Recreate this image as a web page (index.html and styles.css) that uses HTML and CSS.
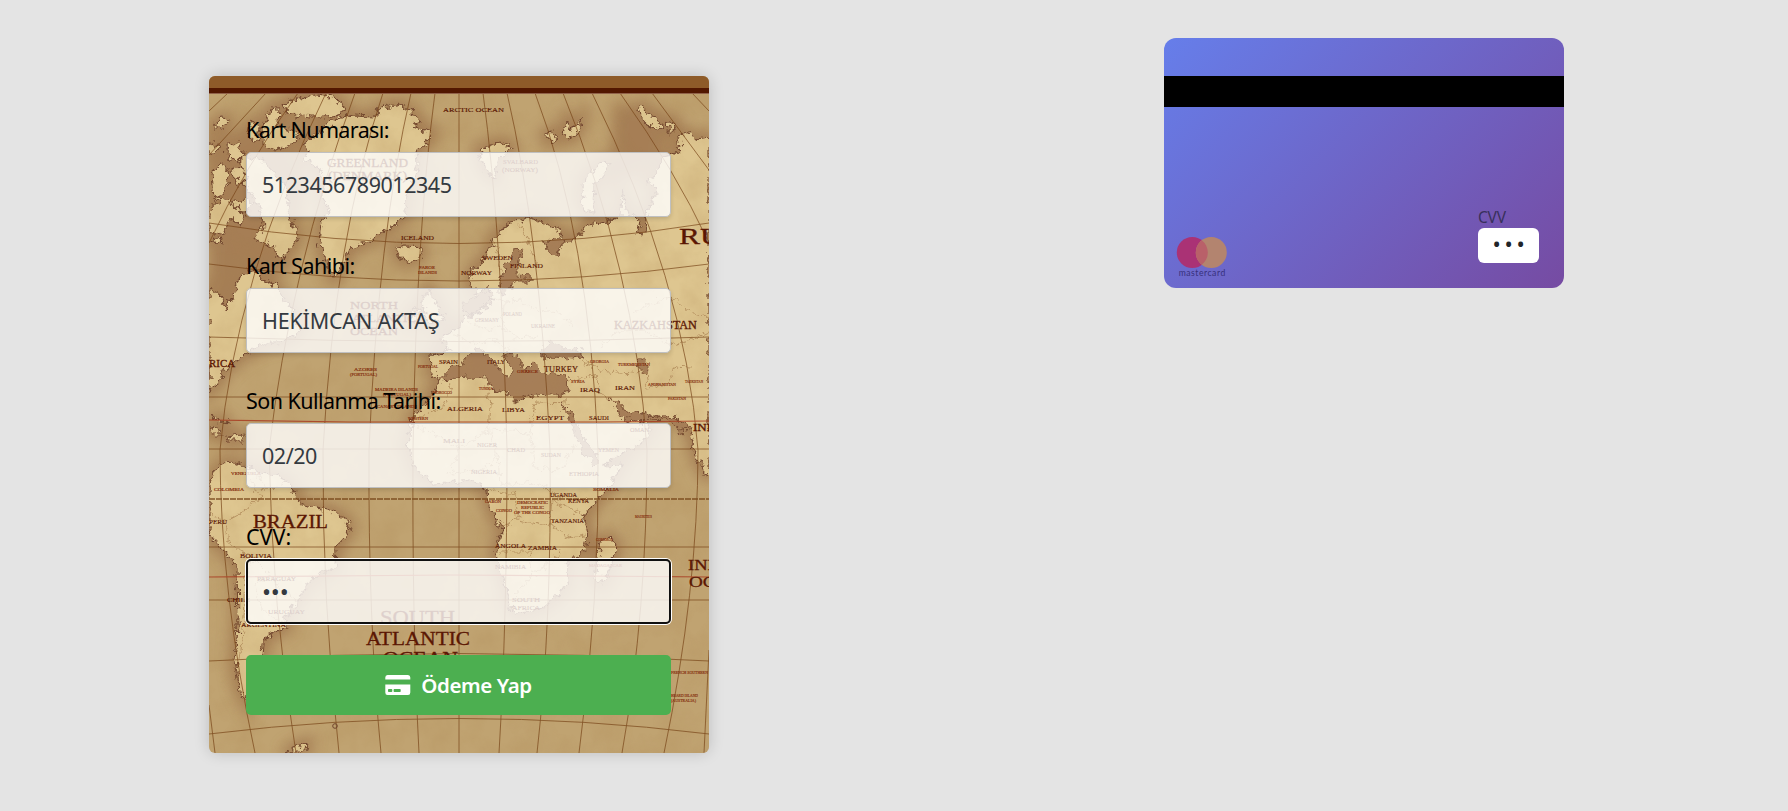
FILE: index.html
```html
<!DOCTYPE html>
<html lang="tr">
<head>
<meta charset="utf-8">
<title>Ödeme</title>
<link rel="stylesheet" href="styles.css">
</head>
<body>
<main class="page">
<section class="column">
<form class="payment">
<svg class="map" viewBox="209 76 500 677" width="500" height="677" aria-hidden="true">
<defs>
<filter id="coast" x="-5%" y="-5%" width="110%" height="110%"><feTurbulence type="fractalNoise" baseFrequency=".16" numOctaves="3" seed="4"/><feDisplacementMap in="SourceGraphic" scale="11" xChannelSelector="R" yChannelSelector="G"/></filter>
<filter id="soft" x="-10%" y="-10%" width="120%" height="120%"><feGaussianBlur stdDeviation="7"/></filter>
<filter id="paper" x="0" y="0" width="100%" height="100%"><feTurbulence type="fractalNoise" baseFrequency=".035" numOctaves="4" seed="9"/><feColorMatrix values="0 0 0 0 .4  0 0 0 0 .23  0 0 0 0 .08  .8 0 0 0 -.28"/></filter>
<g id="land">
<path d="M283 105L300 98L320 94L335 98L344 108L340 115L325 117L310 117L295 115L286 112Z"/>
<path d="M303 145L313 137L327 125L337 118L353 115L373 116L383 107L400 104L412 112L420 122L413 127L433 132L428 142L417 148L418 165L413 182L407 198L404 218L387 230L367 242L350 248L343 265L335 278L327 265L320 242L322 222L330 212L323 198L323 178L317 165L303 160L310 150Z"/>
<path d="M240 155L262 160L285 185L290 215L298 237L290 250L280 260L272 246L254 238L264 227L258 205L245 185Z"/>
<path d="M263 128L271 108L279 108L278 124L286 130L300 133L292 144L277 151L263 144Z"/>
<path d="M213 128L221 118L227 119L224 128Z M227 146L236 143L244 152L238 162L228 158Z M212 174L219 164L227 168L228 178L222 195L214 199Z M230 170L242 166L246 178L238 186Z M209 210L220 198L230 200L244 215L240 224L231 218L224 232L215 236L209 232Z M229 204L244 200L254 202L247 214Z M247 130L254 122L260 130L257 141L250 140Z M209 146L216 142L219 150L209 154Z M213 240L222 237L221 244Z"/>
<path d="M241 276L255 266L262 280L275 285L285 300L296 316L300 332L285 341L265 343L247 353L237 360L225 370L220 380L209 391L209 288L220 294L226 310L233 294Z"/>
<path d="M395 248L407 245L421 247L421 256L410 262L399 258Z"/>
<path d="M479 150L500 142L512 147L505 155L498 160L494 177L485 170Z M545 136L551 131L558 137L552 142Z M563 133L567 120L572 129L581 120L578 133L568 139Z"/>
<path d="M638 109L643 106L648 114L658 116L662 125L656 129L648 125L640 118Z M666 121L676 124L672 135L667 129Z"/>
<path d="M603 161L610 165L602 175L594 185L593 205L595 212L586 211L582 200L585 178Z"/>
<path d="M422 300L429 290L436 302L444 320L430 323L425 315Z M411 311L420 308L420 320L411 322Z"/>
<path d="M709 137L698 139L688 134L678 136L680 148L672 155L663 157L655 175L647 180L658 190L650 205L647 218L646 234L636 233L641 222L628 214L622 190L621 215L607 222L588 225L583 232L575 239L563 243L561 232L545 224L528 218L512 222L498 232L491 245L484 260L472 270L470 282L476 294L488 286L494 300L480 311L465 320L451 332L440 339L451 350L430 354L431 372L440 380L430 398L413 418L407 447L416 470L433 484L447 483L470 480L487 489L488 503L502 530L495 553L502 577L510 600L513 613L530 612L543 608L557 597L568 580L566 563L585 550L588 533L583 517L597 500L610 485L622 465L602 466L620 456L645 440L651 428L632 416L665 416L681 420L690 430L696 455L706 475L709 474Z"/>
<path d="M600 542L612 538L617 546L611 567L602 584L594 578L597 560Z"/>
<path d="M209 484L216 470L223 463L234 462L257 471L273 475L287 481L297 497L303 506L330 510L343 517L350 527L343 540L336 548L335 567L310 580L298 600L285 619L286 628L272 634L263 643L262 658L250 675L247 702L240 690L235 660L238 627L237 567L230 557L213 540L209 530Z"/>
<path d="M209 429L217 428L223 435L214 435Z M226 437L243 435L243 441L228 441Z M212 416L223 421L232 423L218 422Z M285 753L297 747L307 743L306 750L300 753Z"/>
</g>
<g id="sea">
<path d="M440 380L452 366L463 362L470 350L482 349L495 363L507 378L513 368L504 355L516 354L525 372L534 363L545 373L567 375L568 392L552 396L535 395L517 401L508 393L494 390L488 378L467 377Z"/>
<path d="M541 350L552 342L562 349L574 347L582 352L582 358L570 359L554 357L543 358Z"/>
<path d="M560 402L571 413L577 425L589 446L599 461L594 466L582 449L572 427Z M610 400L618 401L631 415L637 411L654 417L668 416L690 425L685 434L665 419L636 421L623 418Z"/>
<path d="M514 250L522 249L518 265L515 275L534 276L530 281L516 281L511 290L500 294L500 280L506 266Z M543 240L564 241L557 256L547 249Z M476 296L490 291L492 297L482 307L470 316L460 308Z M640 359L648 362L646 374L637 366Z"/>
</g>
</defs>
<rect class="ocean" x="209" y="76" width="500" height="677"/>
<g class="shallow" filter="url(#soft)"><use href="#land"/><path d="M215 150L270 120L300 180L285 265L215 300Z M620 110L670 120L650 160L615 180Z"/></g>
<g filter="url(#coast)"><use class="land" href="#land"/><use class="sea" href="#sea"/></g>
<rect x="209" y="76" width="500" height="677" filter="url(#paper)" opacity=".45"/>
<g class="borders" filter="url(#coast)">
<path d="M493 240L498 252L500 270M519 224L528 240L537 265M487 292L504 302L520 300L535 310L560 312L572 327M470 322L488 330L500 326L517 338L540 336M504 302L503 328M451 333L475 344L493 340L510 350M634 312L654 303L672 297L690 312L709 317M600 346L621 331L646 330L670 345L690 340L709 331M583 360L600 371L620 373L645 371L647 388L668 385L675 366L690 367M568 380L595 375L600 395L620 404"/>
<path d="M450 385L445 405L416 419M416 425L460 448L488 430L490 405L487 387M488 430L530 432L536 402M536 402L572 403M530 432L535 468L560 470L575 445M460 448L450 473L485 470L498 455L488 430M498 455L500 485L535 482L560 498L588 500M487 489L515 495L518 520L500 527M518 520L550 525L552 500L588 518M550 525L570 538L585 535M500 552L530 552L532 575L516 595M532 575L555 560L560 548M209 512L225 522L240 514L260 498L250 480M225 522L230 545L252 557L270 575L280 590L298 600M270 575L255 585L262 610L285 625M252 557L246 575L244 620L240 660M257 471L265 488L276 490L287 482"/>
</g>
<g class="grid">
<path d="M459 93V753M483 93Q502 235 507 450Q507 620 499 753M507 93Q540 235 550 450Q552 620 537 753M535 93Q589 235 598 450Q600 600 579 753M563 93Q635 270 647 450Q647 610 622 753M592 93Q685 280 698 450Q698 590 664 753M620 93Q675 170 709 243M652 93L709 170M692 93L709 111M709 650L704 753"/>
<path d="M435 93Q416 235 413 450Q412 620 419 753M411 93Q378 235 369 450Q368 620 381 753M383 93Q335 235 323 450Q322 600 339 753M355 93Q290 270 269 450Q272 610 296 753M326 93Q235 280 220 450Q220 590 255 753M298 93Q243 170 209 243M266 93L209 155M228 93L209 111M209 705L215 753"/>
<path d="M209 223Q459 264 709 223M209 264Q459 298 709 264M209 337Q459 346 709 337M209 397H709M209 449H709M209 547H709M209 600H709M209 661Q459 646 709 661M209 734Q459 703 709 734"/>
<path class="equator" d="M209 499H709"/>
<path class="tropic" d="M209 420L350 422H600L709 421M209 577L450 575L709 577"/>
</g>
<g class="names">
<g class="big">
<text x="679" y="244" font-size="24" textLength="112">RUSSIA</text>
<text x="253" y="528" font-size="18" textLength="75">BRAZIL</text>
<text x="380" y="624" font-size="18" textLength="75">SOUTH</text>
<text x="366" y="645" font-size="18" textLength="104">ATLANTIC</text>
<text x="383" y="665" font-size="18" textLength="75">OCEAN</text>
<text x="327" y="167" font-size="12.5" textLength="81">GREENLAND</text>
<text x="328" y="180" font-size="12.5" textLength="79">(DENMARK)</text>
<text x="350" y="309" font-size="11" textLength="48">NORTH</text>
<text x="352" y="322" font-size="11" textLength="64">ATLANTIC</text>
<text x="350" y="335" font-size="11" textLength="48">OCEAN</text>
<text x="614" y="329" font-size="12" textLength="83">KAZKAHSTAN</text>
<text x="688" y="570" font-size="15" textLength="66">INDIAN</text>
<text x="689" y="587" font-size="15" textLength="66">OCEAN</text>
<text x="693" y="431" font-size="11" textLength="37">INDIA</text>
<text x="209" y="367" font-size="10" textLength="26">RICA</text>
</g>
<g class="mid">
<text x="443" y="112" textLength="61">ARCTIC OCEAN</text>
<text x="401" y="240" textLength="33">ICELAND</text>
<text x="482" y="260" textLength="31">SWEDEN</text><text x="510" y="268" textLength="33">FINLAND</text><text x="461" y="275" textLength="31">NORWAY</text>
<text x="544" y="372" font-size="8.5" textLength="34">TURKEY</text><text x="580" y="392" textLength="20">IRAQ</text><text x="615" y="390" textLength="20">IRAN</text>
<text x="447" y="411" textLength="36">ALGERIA</text><text x="502" y="412" textLength="23">LIBYA</text><text x="536" y="420" textLength="28">EGYPT</text><text x="589" y="420" textLength="20">SAUDI</text>
<text x="439" y="364" textLength="19">SPAIN</text><text x="487" y="364" textLength="18">ITALY</text>
<text x="443" y="443" textLength="22">MALI</text><text x="477" y="447" textLength="20">NIGER</text><text x="507" y="452" textLength="18">CHAD</text><text x="541" y="457" textLength="20">SUDAN</text><text x="569" y="476" textLength="30">ETHIOPIA</text><text x="471" y="474" textLength="26">NIGERIA</text>
<text x="550" y="497" textLength="27">UGANDA</text><text x="568" y="503" textLength="21">KENYA</text><text x="551" y="523" textLength="33">TANZANIA</text>
<text x="495" y="548" textLength="31">ANGOLA</text><text x="528" y="550" textLength="29">ZAMBIA</text><text x="495" y="569" textLength="31">NAMIBIA</text><text x="512" y="602" textLength="28">SOUTH</text><text x="512" y="610" textLength="28">AFRICA</text>
<text x="209" y="524" textLength="18">PERU</text><text x="240" y="558" textLength="32">BOLIVIA</text><text x="257" y="581" textLength="39">PARAGUAY</text><text x="268" y="614" textLength="37">URUGUAY</text><text x="227" y="602" textLength="23">CHILE</text><text x="241" y="627" textLength="45">ARGENTINA</text>
<text x="503" y="164" textLength="35">SVALBARD</text><text x="502" y="172" textLength="36">(NORWAY)</text><text x="475" y="322" textLength="24">GERMANY</text><text x="503" y="316" textLength="19">POLAND</text><text x="531" y="328" textLength="24">UKRAINE</text><text x="630" y="432" textLength="19">OMAN</text><text x="598" y="452" textLength="21">YEMEN</text>
</g>
<g class="tiny">
<text x="354" y="371" textLength="23">AZORES</text><text x="350" y="376" textLength="27">(PORTUGAL)</text><text x="375" y="391" textLength="43">MADEIRA ISLANDS</text><text x="383" y="396" textLength="28">(PORTUGAL)</text><text x="377" y="408" textLength="40">CANARY ISLANDS</text><text x="408" y="420" textLength="20">WESTERN</text>
<text x="419" y="269" textLength="16">FAROE</text><text x="418" y="274" textLength="19">ISLANDS</text><text x="231" y="475" textLength="30">VENEZUELA</text><text x="214" y="491" textLength="30">COLOMBIA</text><text x="418" y="368" textLength="20">PORTUGAL</text><text x="517" y="373" textLength="21">GREECE</text><text x="479" y="390" textLength="14">TUNISIA</text><text x="571" y="383" textLength="14">SYRIA</text><text x="618" y="366" textLength="32">TURKMENISTAN</text><text x="648" y="386" textLength="28">AFGHANISTAN</text><text x="685" y="383" textLength="18">TAJIKISTAN</text><text x="668" y="400" textLength="18">PAKISTAN</text><text x="590" y="363" textLength="19">GEORGIA</text><text x="433" y="394" textLength="19">MOROCCO</text>
<text x="517" y="504" textLength="31">DEMOCRATIC</text><text x="521" y="509" textLength="23">REPUBLIC</text><text x="514" y="514" textLength="36">OF THE CONGO</text><text x="485" y="503" textLength="16">GABON</text><text x="496" y="512" textLength="16">CONGO</text><text x="596" y="541" textLength="17">COMOROS</text><text x="635" y="518" textLength="17">MAURITIUS</text><text x="671" y="674" textLength="37">FRENCH SOUTHERN</text><text x="671" y="697" textLength="27">HEARD ISLAND</text><text x="671" y="702" textLength="25">(AUSTRALIA)</text><text x="593" y="491" textLength="26">SOMALIA</text><text x="589" y="567" textLength="33">MADAGASCAR</text>
</g>
</g>
<circle cx="335" cy="726" r="2.3" fill="none" stroke="#70452d"/>
<path fill="#8e5b29" d="M209 76H709V88H209Z"/><path fill="#521700" d="M209 88H709V93H209Z"/><path fill="#91624a" d="M209 93H709V94H209Z"/>
</svg>
<div class="group"><label class="label l1" for="no">Kart Numarası:</label><input class="field digits" id="no" value="5123456789012345"></div>
<div class="group"><label class="label l2" for="ad">Kart Sahibi:</label><input class="field name" id="ad" value="HEKİMCAN AKTAŞ"></div>
<div class="group"><label class="label l3" for="tarih">Son Kullanma Tarihi:</label><input class="field digits" id="tarih" value="02/20"></div>
<div class="group"><label class="label l4" for="cvv">CVV:</label><input class="field secret active" id="cvv" value="•••"></div>
<button class="pay" type="button"><svg width="26" height="20" viewBox="0 0 26 20"><path fill="#fff" fill-rule="evenodd" d="M2.5 0H23Q25.3 0 25.3 2.5V4.6H.3V2.5Q.3 0 2.5 0ZM.3 9.6H25.3V17.5Q25.3 20 23 20H2.5Q.3 20 .3 17.5ZM3.8 14Q3 14 3 15V16.2Q3 17 3.8 17H6.5Q7.3 17 7.3 16.2V15Q7.3 14 6.5 14ZM9.3 14Q8.6 14 8.6 15V16.2Q8.6 17 9.3 17H15Q15.7 17 15.7 16.2V15Q15.7 14 15 14Z"/></svg><span>Ödeme Yap</span></button>
</form>
</section>
<section class="column card-column">
<div class="card">
<div class="stripe"></div>
<div class="card-foot">
<svg class="brand" width="52" height="42" viewBox="0 0 52 42"><circle cx="16.3" cy="16.5" r="15.5" fill="#aa3275"/><circle cx="35.3" cy="16.5" r="15.5" fill="#b3846f"/><path fill="#b96069" d="M25.8 4.25A15.5 15.5 0 0 1 25.8 28.75A15.5 15.5 0 0 1 25.8 4.25Z"/><text x="2.7" y="40" textLength="46.5">mastercard</text></svg>
<div class="code"><span class="code-label">CVV</span><span class="code-box">•••</span></div>
</div>
</div>
</section>
</main>
<script src="map.js"></script>
</body>
</html>
```
FILE: map.js
```js
// Stretch the lettering of the place names, not only the gaps between letters.
document.querySelectorAll(".names text[textLength]").forEach(function (name) {
  name.setAttribute("lengthAdjust", "spacingAndGlyphs");
});
```
FILE: styles.css
```css
* { box-sizing: border-box; }
body { margin: 0; background: #e4e4e4; font-family: "Noto Sans", "Open Sans", sans-serif; color: #212529; }
.page { display: grid; grid-template-columns: 918px 1fr; height: 811px; overflow: hidden; }
.column { display: flex; justify-content: center; align-items: flex-start; padding-top: 76px; }
.card-column { padding: 38px 0 0 246px; justify-content: flex-start; }
.payment { position: relative; width: 500px; height: 677px; padding: 37px 38px 0 37px; border-radius: 8px; box-shadow: 0 0 15px rgba(0,0,0,.18); display: flex; flex-direction: column; }
.map { position: absolute; inset: 0; border-radius: 6px; overflow: hidden; }
.group { position: relative; height: 135.5px; display: flex; flex-direction: column; }
.label { height: 39.3px; line-height: 34px; font-size: 21.5px; color: #000; white-space: nowrap; }
.l1 { letter-spacing: -.62px; }
.l2 { letter-spacing: -.5px; }
.l3 { letter-spacing: -.55px; }
.l4 { letter-spacing: 0; }
.field { width: 425px; height: 65px; padding: 0 15px; font: 21.5px "Noto Sans", sans-serif; color: #343a40; background: rgba(255,255,255,.8); border: 1px solid #bfc0c2; border-radius: 5px; box-shadow: 0 2px 4px rgba(0,0,0,.14); outline: 0; }
.digits { letter-spacing: -.45px; }
.name { letter-spacing: -.2px; }
.secret { letter-spacing: -.2px; font-size: 24px; }
.active { border: 2px solid #101010; padding: 0 14px; box-shadow: 0 0 0 1px #fff; }
.pay { position: relative; width: 425px; height: 60px; border: 0; border-radius: 5px; background: #4caf50; color: #fff; font: 600 20.5px "Noto Sans", sans-serif; letter-spacing: -.4px; display: flex; justify-content: center; align-items: center; gap: 10px; }
.ocean { fill: #c0a371; }
.shallow { fill: #9b714c; stroke: #9b714c; stroke-width: 13px; opacity: .72; }
.land { fill: #dec690; stroke: #70452d; stroke-width: 1.1px; }
.sea { fill: #a67e58; stroke: #70452d; stroke-width: .9px; }
.borders { fill: none; stroke: #ad8657; stroke-width: .8px; }
.grid { fill: none; stroke: #764316; stroke-width: .8px; opacity: .85; }
.grid .equator { stroke-width: 1.5px; stroke-dasharray: 6 1; }
.grid .tropic { stroke: #a93d22; stroke-width: 1.2px; }
.names { fill: #5b1703; font-family: "Liberation Serif", serif; }
.big { stroke: #5b1703; stroke-width: .3px; }
.mid { font-size: 7px; stroke: #5b1703; stroke-width: .15px; }
.tiny { font-size: 4.8px; fill: #822909; stroke: #822909; stroke-width: .15px; }
.card { width: 400px; height: 250px; padding-top: 38px; border-radius: 12px; background: linear-gradient(135deg, #667eea, #764ba2); display: flex; flex-direction: column; }
.stripe { height: 31px; background: #000; }
.card-foot { display: flex; justify-content: space-between; padding: 98px 25px 0 12px; }
.brand { margin-top: 31px; }
.brand text { font: 8.6px Lato, sans-serif; fill: #37307b; }
.code { display: flex; flex-direction: column; width: 61px; }
.code-label { height: 23px; line-height: 25px; font-size: 15.5px; letter-spacing: -.2px; color: #38305b; }
.code-box { height: 35px; border-radius: 6px; background: #fff; font-size: 22px; line-height: 31px; letter-spacing: 3.7px; padding-left: 14.5px; }
```
